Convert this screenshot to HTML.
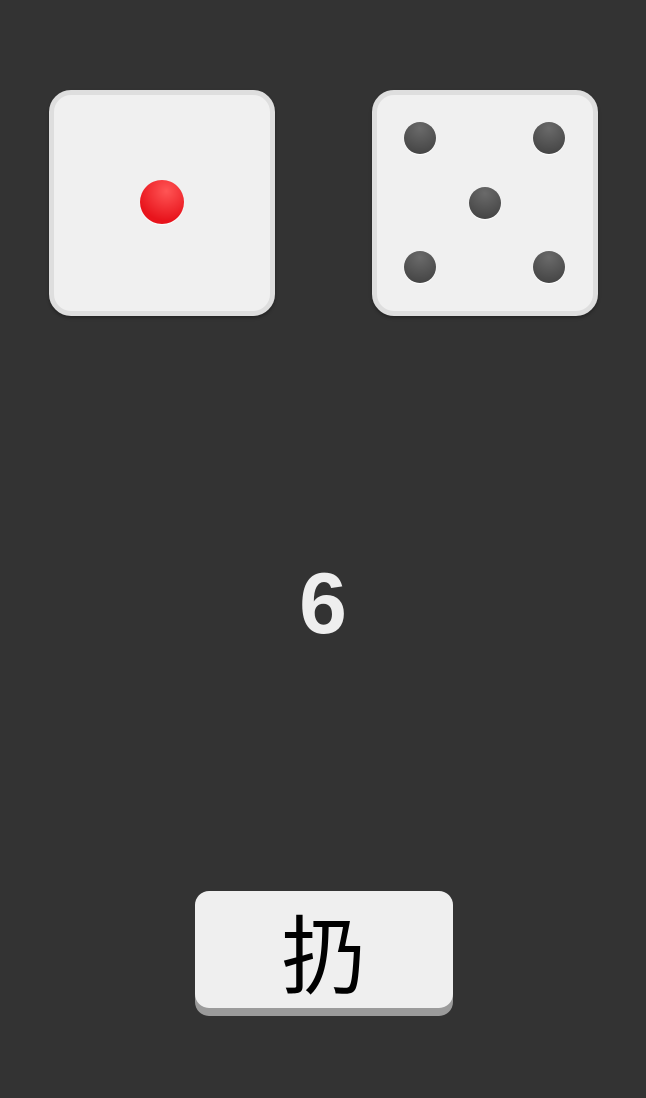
<!DOCTYPE html>
<html><head><meta charset="utf-8"><style>
html,body{margin:0;padding:0;background:#333;width:646px;height:1098px;overflow:hidden;position:relative;font-family:"Liberation Sans","Noto Sans CJK SC",sans-serif}
.die{position:absolute;top:90px;width:216px;height:216px;border:5px solid #dedede;border-radius:22px;background:#f0f0f0;box-shadow:0 2px 3px rgba(0,0,0,.3)}
.pip{position:absolute;width:32px;height:32px;border-radius:50%;background:radial-gradient(circle at 50% 20%,#6a6a6a,#3e3e3e);box-shadow:0 1px 1px #fff}
.red{position:absolute;width:44px;height:44px;border-radius:50%;background:radial-gradient(circle at 60% 25%,#ff5555,#e8141c 70%);box-shadow:0 1px 1px #fff}
.num{position:absolute;left:0;width:646px;top:556px;text-align:center;color:#eee;font-weight:bold;font-size:86px;line-height:96px}
.btn{position:absolute;left:195px;top:891px;width:258px;height:117px;border-radius:14px;background:#efefef;box-shadow:0 8px 0 #9b9b9b;text-align:center;font-size:86px;line-height:117px;color:#000;font-family:"Noto Sans CJK SC",sans-serif}
</style></head><body>
<div class="die" style="left:49px"><div class="red" style="left:86px;top:85px"></div></div>
<div class="die" style="left:372px">
<div class="pip" style="left:27px;top:27px"></div>
<div class="pip" style="left:156px;top:27px"></div>
<div class="pip" style="left:92px;top:92px"></div>
<div class="pip" style="left:27px;top:156px"></div>
<div class="pip" style="left:156px;top:156px"></div>
</div>
<div class="num">6</div>
<div class="btn">扔</div>
</body></html>
